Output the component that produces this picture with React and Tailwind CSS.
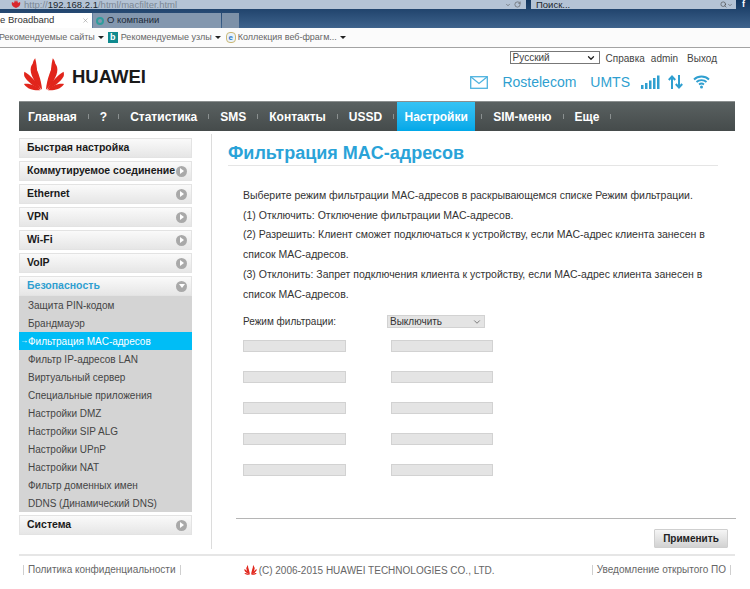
import React from "react";
import { ChevronDown, RotateCw, Search, X } from "lucide-react";

const font = { fontFamily: '"Liberation Sans", Arial, sans-serif' };

const navItems = ["Главная", "?", "Статистика", "SMS", "Контакты", "USSD", "Настройки", "SIM-меню", "Еще"];

const topMenu = [
  { label: "Быстрая настройка" },
  { label: "Коммутируемое соединение", arrow: true },
  { label: "Ethernet", arrow: true },
  { label: "VPN", arrow: true },
  { label: "Wi-Fi", arrow: true },
  { label: "VoIP", arrow: true },
];

const subMenu = [
  "Защита PIN-кодом",
  "Брандмауэр",
  "Фильтрация MAC-адресов",
  "Фильтр IP-адресов LAN",
  "Виртуальный сервер",
  "Специальные приложения",
  "Настройки DMZ",
  "Настройки SIP ALG",
  "Настройки UPnP",
  "Настройки NAT",
  "Фильтр доменных имен",
  "DDNS (Динамический DNS)",
];

const HuaweiPetals = ({ className }) => (
  <svg viewBox="0 0 44 34" className={className}>
    <g fill="#e1251b">
      <path d="M21 33 C19 24 17 12 18 6 C18.500 3 20 1 21 0 C22.500 7 23 20 21 33Z" transform="translate(-6.500 0) rotate(-3 21 33)" />
      <path d="M23 33 C25 24 27 12 26 6 C25.500 3 24 1 23 0 C21.500 7 21 20 23 33Z" transform="translate(6.500 0) rotate(3 23 33)" />
      <path d="M20 33 C14 27 8 19 8 12 C8 9 9 7 10.500 5.500 C15 11 19 22 20 33Z" />
      <path d="M24 33 C30 27 36 19 36 12 C36 9 35 7 33.500 5.500 C29 11 25 22 24 33Z" />
      <path d="M19 33 C12 30 4 24 1.500 19 C1 17.500 1 16 1.500 14 C8 18 15 25 19 33Z" />
      <path d="M25 33 C32 30 40 24 42.500 19 C43 17.500 43 16 42.500 14 C36 18 29 25 25 33Z" />
      <path d="M18 33.500 C12 34 5 33 1 27 C7 26 14 29 18 33.500Z" />
      <path d="M26 33.500 C32 34 39 33 43 27 C37 26 30 29 26 33.500Z" />
    </g>
  </svg>
);

const Arrow = ({ open }) => (
  <span className="flex h-[11px] w-[11px] items-center justify-center rounded-full bg-[#a9a9a9]">
    {open ? (
      <span className="h-0 w-0 border-x-[3px] border-t-[4px] border-x-transparent border-t-white" />
    ) : (
      <span className="ml-px h-0 w-0 border-y-[3px] border-l-[4px] border-y-transparent border-l-white" />
    )}
  </span>
);

const MenuItem = ({ label, arrow, open, active }) => (
  <div className="flex h-[20px] items-center justify-between border border-[#e3e3e3] bg-gradient-to-b from-[#fafafa] to-[#e6e6e6] pl-[7px] pr-[4px]">
    <span className={`text-[10.500px] font-bold ${active ? "text-[#2f9fd0]" : "text-[#1a1a1a]"}`}>{label}</span>
    {arrow && <Arrow open={open} />}
  </div>
);

const MacRow = () => (
  <div className="flex gap-[45px]">
    <div className="h-[12px] w-[103px] border border-[#d2d2d2] bg-[#e4e4e4]" />
    <div className="h-[12px] w-[102px] border border-[#d2d2d2] bg-[#e4e4e4]" />
  </div>
);

export default function App() {
  return (
    <div className="h-[589px] w-[750px] overflow-hidden bg-white" style={font}>
      {/* browser chrome */}
      <div className="h-[28px] bg-gradient-to-b from-[#12365f] to-[#3f638c]">
        <div className="flex h-[10px] items-start">
          <div className="flex h-[9px] w-[526px] items-end overflow-hidden bg-[#b4c3d5] pl-[11px]">
            <svg viewBox="0 0 10 8" className="mb-[1px] h-[8px] w-[10px]">
              <path d="M5 8 C2 7 0 5 1 2 L3 3 L4 0 L5 2 L6 0 L7 3 L9 2 C10 5 8 7 5 8Z" fill="#d9272e" />
            </svg>
            <span className="ml-[3px] text-[9.500px] leading-[9px] text-[#7b8794]">
              http://<span className="text-[#20262c]">192.168.2.1</span>/html/macfilter.html
            </span>
            <ChevronDown className="ml-auto mb-[1px] h-[6px] w-[6px] text-[#444]" />
            <RotateCw className="mb-[1px] ml-[3px] mr-[5px] h-[7px] w-[7px] text-[#555]" />
          </div>
          <div className="ml-[5px] flex h-[9px] w-[205px] items-end bg-[#b4c3d5] pl-[5px] pr-[3px]">
            <span className="text-[9.500px] leading-[9px] text-[#20262c]">Поиск...</span>
            <Search className="ml-auto mb-[1px] h-[7px] w-[7px] text-[#444]" />
            <ChevronDown className="mb-[1px] h-[6px] w-[6px] text-[#444]" />
          </div>
          <span className="ml-[6px] text-[9px] font-bold leading-[9px] text-white">f</span>
        </div>
        <div className="mt-[3px] flex h-[15px]">
          <div className="flex w-[92px] items-center justify-between bg-white pr-[3px]">
            <span className="whitespace-nowrap text-[9.500px] text-[#333]">e Broadband</span>
            <X className="h-[7px] w-[7px] text-[#999]" />
          </div>
          <div className="flex w-[129px] items-center border-l border-[#5f7d9e] bg-[#8397ae] pl-[3px]">
            <span className="h-[8px] w-[8px] rounded-full border-2 border-[#2f9c9c]" />
            <span className="ml-[3px] text-[9.500px] text-[#1d2a38]">О компании</span>
          </div>
          <div className="ml-px w-[17px] bg-[#7d91a8]" />
        </div>
      </div>
      <div className="flex h-[20px] items-center border-b border-[#a3a3a3] bg-[#fbfbfb] text-[9px] text-[#666]">
        <span className="-ml-px">Рекомендуемые сайты</span>
        <span className="ml-[3px] h-0 w-0 border-x-[3px] border-t-[3px] border-x-transparent border-t-[#222]" />
        <span className="ml-[4px] flex h-[11px] w-[10px] items-center justify-center bg-[#0f8a8f] text-[9px] font-bold leading-none text-white">b</span>
        <span className="ml-[3px]">Рекомендуемые узлы</span>
        <span className="ml-[3px] h-0 w-0 border-x-[3px] border-t-[3px] border-x-transparent border-t-[#222]" />
        <span className="ml-[5px] flex h-[11px] w-[10px] items-center justify-center rounded-sm border border-[#cbb874] bg-[#e9f2fa] text-[8px] font-bold leading-none text-[#2a78c8]">e</span>
        <span className="ml-[2px]">Коллекция веб-фрагм...</span>
        <span className="ml-[3px] h-0 w-0 border-x-[3px] border-t-[3px] border-x-transparent border-t-[#222]" />
      </div>

      {/* router page */}
      <div className="ml-[19px] w-[716px]">
        <div className="relative h-[53px]">
          <div className="absolute left-[4px] top-[10px] flex items-center">
            <HuaweiPetals className="h-[33px] w-[42px]" />
            <span className="ml-[7px] mt-[6px] text-[18.500px] font-bold leading-none text-[#1a1a1a]">HUAWEI</span>
          </div>
          <div className="flex justify-end pt-[3px] text-[10px] text-[#444]">
            <div className="flex h-[13px] w-[90px] items-center justify-between border border-[#777] bg-white pl-[2px] pr-[3px]">
              <span>Русский</span>
              <ChevronDown className="h-[10px] w-[10px] text-[#222]" strokeWidth={3} />
            </div>
            <span className="ml-[6px]">Справка</span>
            <span className="ml-[6px]">admin</span>
            <span className="ml-[9px] mr-[18px]">Выход</span>
          </div>
          <div className="mt-[9px] flex items-center justify-end pr-[25px] text-[14px] leading-none text-[#2f9fd0]">
            <svg viewBox="0 0 18 13" className="h-[13px] w-[18px]" fill="none" stroke="#4fb3df" strokeWidth="1.300">
              <rect x="0.700" y="0.700" width="16.600" height="11.600" />
              <path d="M1 1 L9 7.500 L17 1" />
            </svg>
            <span className="ml-[14px]">Rostelecom</span>
            <span className="ml-[14px]">UMTS</span>
            <svg viewBox="0 0 20 14" className="ml-[11px] h-[14px] w-[20px]" fill="#2f9fd0">
              <rect x="0" y="10" width="2.500" height="4" />
              <rect x="4" y="8" width="2.500" height="6" />
              <rect x="8" y="5.500" width="2.500" height="8.500" />
              <rect x="12" y="3" width="2.500" height="11" />
              <rect x="16" y="0.500" width="2.500" height="13.500" />
            </svg>
            <svg viewBox="0 0 15 14" className="ml-[7px] h-[14px] w-[15px]" fill="none" stroke="#2f9fd0" strokeWidth="2">
              <path d="M4 14 V2 M0.800 5 L4 1.500 L7.200 5" />
              <path d="M11 0 V12 M7.800 9 L11 12.500 L14.200 9" />
            </svg>
            <svg viewBox="0 0 17 14" className="ml-[10px] h-[14px] w-[17px]" fill="none" stroke="#2f9fd0" strokeWidth="1.800">
              <path d="M1 4.500 C5 0.500 12 0.500 16 4.500" />
              <path d="M3.500 7 C6 4.500 11 4.500 13.500 7" />
              <path d="M6 9.500 C7.500 8.300 9.500 8.300 11 9.500" />
              <circle cx="8.500" cy="12" r="1.500" fill="#2f9fd0" stroke="none" />
            </svg>
          </div>
        </div>

        <div className="flex h-[30px] items-stretch border-t border-[#8b8f8f] bg-gradient-to-b from-[#5a6161] to-[#454b4b] pl-[9px] text-[12px] font-bold text-white">
          {navItems.map((item) => (
            <React.Fragment key={item}>
              {item === "Настройки" ? (
                <span className="-ml-[8px] -mr-[5px] flex w-[78px] items-center justify-center bg-gradient-to-b from-[#35c3f5] to-[#00a8e8]">{item}</span>
              ) : (
                <span className="flex items-center">{item}</span>
              )}
              <span className="mx-[11px] my-auto h-[5px] w-px bg-[#8a9090]" />
            </React.Fragment>
          ))}
        </div>

        <div className="flex">
          <div className="w-[173px] pt-[7px]">
            <div className="flex flex-col gap-[3px]">
              {topMenu.map((item) => (
                <MenuItem key={item.label} {...item} />
              ))}
              <div>
                <MenuItem label="Безопасность" arrow open active />
                <div className="bg-[#d4d4d4] text-[10px] text-[#444]">
                  {subMenu.map((item) => {
                    const current = item === "Фильтрация MAC-адресов";
                    return (
                      <div key={item} className={`flex h-[18px] items-center pl-[9px] ${current ? "relative bg-[#00bdf6] text-white" : ""}`}>
                        {current && <span className="absolute left-[1px] text-[8px] leading-none">→</span>}
                        {item}
                      </div>
                    );
                  })}
                </div>
              </div>
              <MenuItem label="Система" arrow />
            </div>
          </div>

          <div className="ml-[19px] mt-[3px] h-[415px] w-[524px] border-l border-[#dcdcdc]">
            <div className="ml-[16px] mt-[8px] text-[18px] font-bold leading-[22px] text-[#2aa3d8]">Фильтрация MAC-адресов</div>
            <div className="ml-[16px] mt-px h-px w-[490px] bg-[#e5e5e5]" />
            <div className="ml-[31px] mt-[20px] w-[470px] text-[10.500px] leading-[19.700px] text-[#333]">
              <p>Выберите режим фильтрации MAC-адресов в раскрывающемся списке Режим фильтрации.</p>
              <p>(1) Отключить: Отключение фильтрации MAC-адресов.</p>
              <p>(2) Разрешить: Клиент сможет подключаться к устройству, если MAC-адрес клиента занесен в список MAC-адресов.</p>
              <p>(3) Отклонить: Запрет подключения клиента к устройству, если MAC-адрес клиента занесен в список MAC-адресов.</p>
            </div>
            <div className="ml-[31px] mt-[11px] flex h-[13px] items-center text-[10px] text-[#333]">
              <span className="w-[144px]">Режим фильтрации:</span>
              <div className="flex h-[13px] w-[98px] items-center justify-between border border-[#d2d2d2] bg-[#e4e4e4] pl-[2px] pr-[2px]">
                <span>Выключить</span>
                <ChevronDown className="h-[10px] w-[10px] text-[#666]" />
              </div>
            </div>
            <div className="ml-[31px] mt-[12px] flex flex-col gap-[19px]">
              <MacRow />
              <MacRow />
              <MacRow />
              <MacRow />
              <MacRow />
            </div>
            <div className="ml-[24px] mt-[42px] h-px w-[500px] bg-[#b5b5b5]" />
            <div className="mt-[10px] flex justify-end pr-[7px]">
              <button className="h-[19px] w-[74px] rounded-[1px] border border-[#cfcfcf] bg-gradient-to-b from-[#f5f5f5] to-[#d2d2d2] text-[10px] font-bold text-[#222]">Применить</button>
            </div>
          </div>
        </div>

        <div className="mt-[5px] flex h-[30px] items-center justify-between border-t-2 border-[#e6e6e6] pl-[4px] pr-[4px] text-[10px] text-[#666]">
          <span className="border-x border-[#cfcfcf] px-[4px] leading-[10px]">Политика конфиденциальности</span>
          <span className="ml-[-34px] flex items-center">
            <HuaweiPetals className="mr-[2px] h-[10px] w-[13px]" />
            (C) 2006-2015 HUAWEI TECHNOLOGIES CO., LTD.
          </span>
          <span className="border-x border-[#cfcfcf] px-[4px] leading-[10px]">Уведомление открытого ПО</span>
        </div>
      </div>
    </div>
  );
}
